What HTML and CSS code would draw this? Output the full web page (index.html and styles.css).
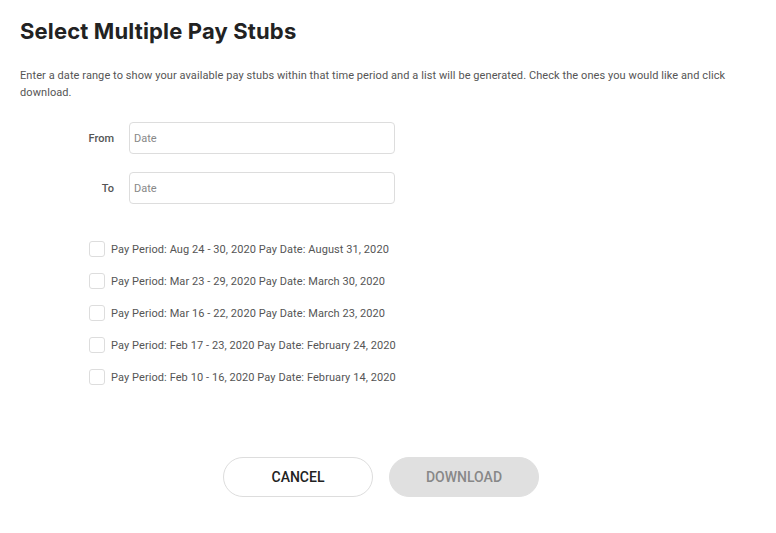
FILE: index.html
```html
<!DOCTYPE html>
<html>
<head>
<meta charset="utf-8">
<link rel="stylesheet" href="styles.css">
</head>
<body>
<div class="page">
  <h1 class="title">Select Multiple Pay Stubs</h1>
  <p class="intro">Enter a date range to show your available pay stubs within that time period and a list will be generated. Check the ones you would like and click download.</p>
  <div class="fields">
    <div class="field"><label class="label">From</label><div class="input">Date</div></div>
    <div class="field"><label class="label">To</label><div class="input">Date</div></div>
  </div>
  <ul class="stubs">
    <li class="stub"><span class="box"></span>Pay Period: Aug 24 - 30, 2020 Pay Date: August 31, 2020</li>
    <li class="stub"><span class="box"></span>Pay Period: Mar 23 - 29, 2020 Pay Date: March 30, 2020</li>
    <li class="stub"><span class="box"></span>Pay Period: Mar 16 - 22, 2020 Pay Date: March 23, 2020</li>
    <li class="stub"><span class="box"></span>Pay Period: Feb 17 - 23, 2020 Pay Date: February 24, 2020</li>
    <li class="stub"><span class="box"></span>Pay Period: Feb 10 - 16, 2020 Pay Date: February 14, 2020</li>
  </ul>
  <div class="actions">
    <button class="btn btn-cancel">CANCEL</button>
    <button class="btn btn-download">DOWNLOAD</button>
  </div>
</div>
</body>
</html>
```
FILE: styles.css
```css
html, body { margin: 0; padding: 0; background: #fff; }
body { font-family: Roboto, "Liberation Sans", sans-serif; color: #555; }
.page { padding: 16px 20px 0 20px; }
.title {
  margin: 0;
  font-family: Inter, "Noto Sans", sans-serif;
  font-weight: 700;
  font-size: 22px;
  line-height: 30px;
  color: #222;
  letter-spacing: 0.15px;
}
.intro {
  margin: 21px 0 0 0;
  font-size: 11px;
  line-height: 17px;
  color: #555;
  padding-right: 20px;
  letter-spacing: 0.08px;
}
.fields { margin-top: 21px; padding-left: 58px; display: flex; flex-direction: column; gap: 18px; }
.field { display: flex; align-items: center; }
.label { width: 36px; text-align: right; font-size: 11px; font-weight: 500; color: #555; margin-right: 15px; }
.input {
  box-sizing: border-box;
  width: 266px; height: 32px; border: 1px solid #ddd; border-radius: 4px;
  font-size: 11px; color: #888; line-height: 32px; padding-left: 4px;
}
.stubs { list-style: none; margin: 37px 0 0 0; padding: 0 0 0 69px; display: flex; flex-direction: column; gap: 16px; }
.stub { display: flex; align-items: center; height: 16px; font-size: 11px; color: #555; letter-spacing: 0.08px; }
.box { width: 14px; height: 14px; border: 1px solid #ddd; border-radius: 3px; margin-right: 6px; }
.actions { display: flex; justify-content: center; gap: 16px; margin-top: 72px; padding-right: 14px; }
.btn {
  width: 150px; height: 40px; border-radius: 20px;
  font-family: Roboto, "Liberation Sans", sans-serif; font-size: 14px; font-weight: 500;
}
.btn-cancel { background: #fff; border: 1px solid #ddd; color: #222; }
.btn-download { background: #e0e0e0; border: 1px solid #e0e0e0; color: #888; }
```
